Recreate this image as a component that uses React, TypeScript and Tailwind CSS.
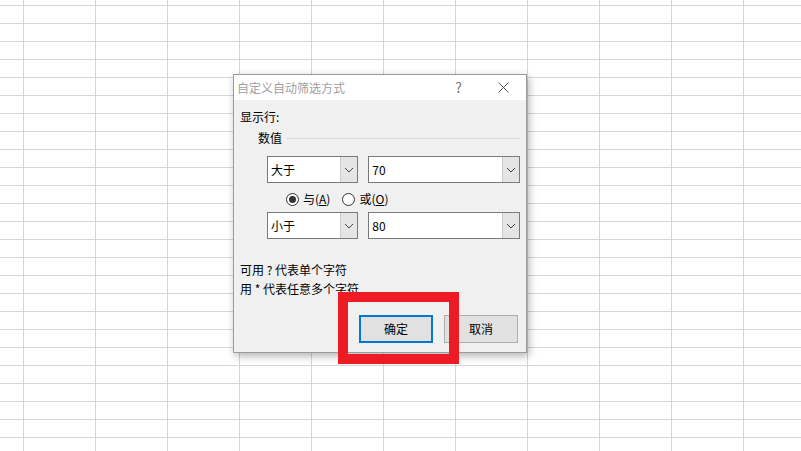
import React from "react";

const font = "font-['Microsoft_YaHei','Noto_Sans_CJK_SC',sans-serif]";

const Chevron = () => (
  <svg width="10" height="6" viewBox="0 0 10 6" fill="none">
    <polyline points="1,1 5,5 9,1" stroke="#444" strokeWidth="1" />
  </svg>
);

const Combo = ({ value, width }: { value: string; width: string }) => (
  <div className={`flex h-[27px] ${width} border border-[#7a7a7a] bg-white`}>
    <div className="flex flex-1 items-center pl-[3px] text-[12px] text-black">{value}</div>
    <div className="flex w-[17px] items-center justify-center border-l border-[#cccccc] bg-[#e5e5e5]">
      <Chevron />
    </div>
  </div>
);

const Radio = ({ checked }: { checked?: boolean }) => (
  <span className="flex h-[13px] w-[13px] items-center justify-center rounded-full border border-[#333] bg-white">
    {checked && <span className="h-[7px] w-[7px] rounded-full bg-[#333]" />}
  </span>
);

const App = () => {
  return (
    <div className={`relative h-[451px] w-[801px] overflow-hidden bg-white ${font}`}>
      {/* sheet grid */}
      <div className="absolute inset-0 bg-[linear-gradient(to_right,#d6d6d6_1px,transparent_1px),linear-gradient(to_bottom,#d6d6d6_1px,transparent_1px)] bg-[size:72px_18px] bg-[position:23px_5px]" />

      {/* dialog */}
      <div className="absolute left-[233px] top-[74px] flex h-[279px] w-[294px] flex-col border border-[#9b9b9b] bg-[#f0f0f0] shadow-[2px_3px_8px_rgba(0,0,0,0.3)]">
        <div className="flex h-[25px] items-center bg-white pl-[3px] text-[12px] text-[#a0a0a0]">
          <span className="flex-1">自定义自动筛选方式</span>
          <span className="mr-[36px] text-[14px] text-[#777]">?</span>
          <svg width="11" height="11" viewBox="0 0 11 11" className="mr-[17px]">
            <path d="M0.5 0.5 L10.5 10.5 M10.5 0.5 L0.5 10.5" stroke="#555" strokeWidth="1" />
          </svg>
        </div>

        <div className="flex flex-1 flex-col pl-[6px] pr-[6px] text-[12px] text-black">
          <div className="mt-[9px] leading-[16px]">显示行:</div>
          <div className="mt-[5px] flex items-center pl-[18px] leading-[16px]">
            <span>数值</span>
            <span className="ml-[5px] h-px flex-1 bg-[#dadada]" />
          </div>

          <div className="mt-[10px] flex gap-[10px] pl-[27px]">
            <Combo value="大于" width="w-[92px]" />
            <Combo value="70" width="w-[153px]" />
          </div>

          <div className="mt-[8px] flex h-[16px] items-center pl-[46px]">
            <Radio checked />
            <span className="ml-[4px]">与(<span className="underline">A</span>)</span>
            <span className="ml-[12px]"><Radio /></span>
            <span className="ml-[4px]">或(<span className="underline">O</span>)</span>
          </div>

          <div className="mt-[5px] flex gap-[10px] pl-[27px]">
            <Combo value="小于" width="w-[92px]" />
            <Combo value="80" width="w-[153px]" />
          </div>

          <div className="mt-[23px] leading-[16px]">可用 ? 代表单个字符</div>
          <div className="mt-[3px] leading-[16px]">用 * 代表任意多个字符</div>

          <div className="mt-[18px] flex justify-end gap-[11px] pr-[2px]">
            <button className="h-[28px] w-[74px] border-2 border-[#0078d7] bg-[#e1e1e1] text-[12px]">确定</button>
            <button className="h-[28px] w-[74px] border border-[#adadad] bg-[#e1e1e1] text-[12px]">取消</button>
          </div>
        </div>
      </div>

      {/* highlight box */}
      <div className="absolute left-[338px] top-[292px] h-[72px] w-[121px] border-[10px] border-[#ed1c24]" />
    </div>
  );
};

export default App;
